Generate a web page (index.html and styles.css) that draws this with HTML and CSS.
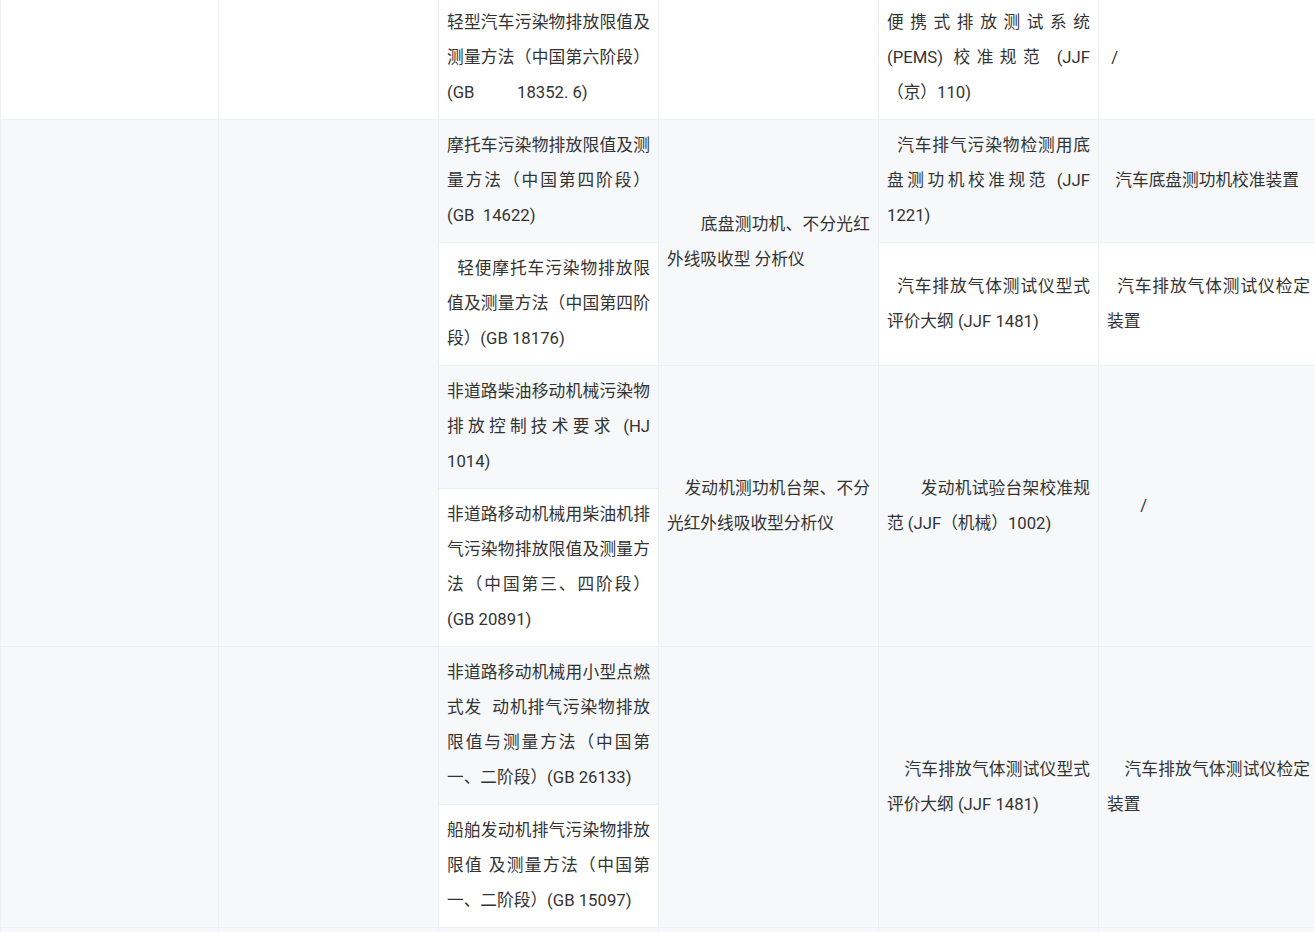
FILE: index.html
```html
<!DOCTYPE html>
<html lang="zh-CN">
<head>
<meta charset="utf-8">
<title>排放检测标准与计量规范对照表</title>
<link rel="stylesheet" href="styles.css">
</head>
<body>
<div class="wrap">
<table class="spec">
<colgroup>
<col class="c-first">
<col class="c-std"><col class="c-std"><col class="c-std"><col class="c-std"><col class="c-std">
</colgroup>
<tbody>
<tr>
<td></td>
<td></td>
<td>轻型汽车污染物排放限值及测量方法（中国第六阶段）(GB&emsp;&emsp;&ensp;18352. 6)</td>
<td></td>
<td>便携式排放测试系统(PEMS)&nbsp;校准规范 (JJF（京）110)</td>
<td>&nbsp;/</td>
</tr>
<tr>
<td rowspan="4"></td>
<td rowspan="4"></td>
<td>摩托车污染物排放限值及测量方法（中国第四阶段）(GB&nbsp; 14622)</td>
<td rowspan="2">　　底盘测功机、不分光红外线吸收型 分析仪</td>
<td>&nbsp;&nbsp;汽车排气污染物检测用底盘测功机校准规范 (JJF 1221)</td>
<td>&nbsp;&nbsp;汽车底盘测功机校准装置</td>
</tr>
<tr>
<td>&nbsp;&nbsp;轻便摩托车污染物排放限值及测量方法（中国第四阶段）(GB 18176)</td>
<td>&nbsp;&nbsp;汽车排放气体测试仪型式评价大纲 (JJF 1481)</td>
<td>&nbsp;&nbsp;汽车排放气体测试仪检定装置</td>
</tr>
<tr>
<td>非道路柴油移动机械污染物排放控制技术要求 (HJ 1014)</td>
<td rowspan="2">&nbsp;&nbsp;&nbsp;&nbsp;发动机测功机台架、不分光红外线吸收型分析仪</td>
<td rowspan="2">　　发动机试验台架校准规范 (JJF（机械）1002)</td>
<td rowspan="2">　　/</td>
</tr>
<tr>
<td>非道路移动机械用柴油机排气污染物排放限值及测量方法（中国第三、四阶段）(GB 20891)</td>
</tr>
<tr>
<td rowspan="2"></td>
<td rowspan="2"></td>
<td>非道路移动机械用小型点燃式发&nbsp;&nbsp;动机排气污染物排放限值与测量方法（中国第一、二阶段）(GB 26133)</td>
<td rowspan="2"></td>
<td rowspan="2">&nbsp;&nbsp;&nbsp;&nbsp;汽车排放气体测试仪型式评价大纲 (JJF 1481)</td>
<td rowspan="2">&nbsp;&nbsp;&nbsp;&nbsp;汽车排放气体测试仪检定装置</td>
</tr>
<tr>
<td>船舶发动机排气污染物排放限值 及测量方法（中国第一、二阶段）(GB 15097)</td>
</tr>
<tr class="tail">
<td>&nbsp;</td><td>&nbsp;</td><td>&nbsp;</td><td>&nbsp;</td><td>&nbsp;</td><td>&nbsp;</td>
</tr>
</tbody>
</table>
</div>
</body>
</html>
```

FILE: styles.css
```css
html, body {
  margin: 0;
  padding: 0;
  background: #ffffff;
}

body {
  font-family: Roboto, "Noto Sans CJK SC", sans-serif;
  font-size: 16.7px;
  color: #333333;
}

.wrap {
  width: 1315px;
  height: 932px;
  overflow: hidden;
}

.spec {
  width: 1318px;
  margin-top: -4px;
  border-collapse: collapse;
  table-layout: fixed;
}

.c-first { width: 218px; }
.c-std { width: 220px; }

.spec td {
  border: 1px solid #eef1f4;
  padding: 8px 8px 9px;
  line-height: 35px;
  text-align: justify;
  vertical-align: middle;
}

.spec tr:nth-child(even) td {
  background: #f6f8fa;
}

.spec tr:nth-child(odd) td {
  background: #ffffff;
}
```
